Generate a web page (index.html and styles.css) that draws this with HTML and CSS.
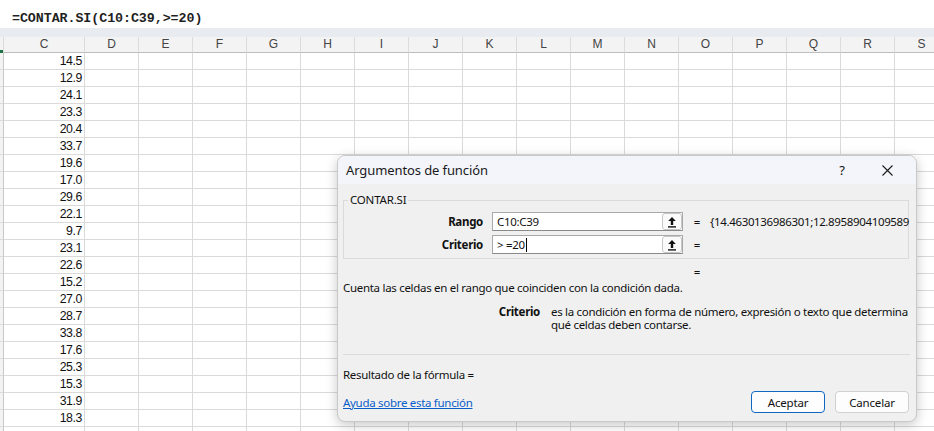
FILE: index.html
```html
<!DOCTYPE html>
<html lang="es">
<head>
<meta charset="utf-8">
<title>CONTAR.SI</title>
<link rel="stylesheet" href="styles.css">
</head>
<body>
<div class="app">
  <div class="formula-bar"><span class="formula">=CONTAR.SI(C10:C39,&gt;=20)</span></div>
  <div class="band"></div>
  <div class="sheet">
    <div class="row header-row">
      <div class="cell rh"><span class="sel-mark"></span></div>
      <div class="cell ch">C</div><div class="cell ch">D</div><div class="cell ch">E</div><div class="cell ch">F</div><div class="cell ch">G</div><div class="cell ch">H</div><div class="cell ch">I</div><div class="cell ch">J</div><div class="cell ch">K</div><div class="cell ch">L</div><div class="cell ch">M</div><div class="cell ch">N</div><div class="cell ch">O</div><div class="cell ch">P</div><div class="cell ch">Q</div><div class="cell ch">R</div><div class="cell ch">S</div>
    </div>
    <div id="rows"></div>
  </div>

  <div class="dialog">
    <div class="titlebar">
      <span class="title">Argumentos de función</span>
      <span class="help">?</span>
      <span class="close"><svg width="11" height="11" viewBox="0 0 11 11"><path d="M0.5 0.5 L10.5 10.5 M10.5 0.5 L0.5 10.5" stroke="#1a1a1a" stroke-width="1.1" fill="none"/></svg></span>
    </div>
    <div class="dbody">
      <fieldset class="group">
        <legend>CONTAR.SI</legend>
        <div class="args">
          <label class="arg-label">Rango</label>
          <div class="input"><span class="input-text">C10:C39</span><span class="ref-btn"><svg width="10" height="12" viewBox="0 0 10 12"><path d="M5 1 L1.2 5 H3.8 V9 H6.2 V5 H8.8 Z" fill="#111"/><rect x="1" y="10.2" width="8" height="1.4" fill="#111"/></svg></span></div>
          <span class="eq">=</span>
          <span class="val">{14.4630136986301;12.8958904109589</span>

          <label class="arg-label">Criterio</label>
          <div class="input"><span class="input-text">&gt; =20<span class="caret"></span></span><span class="ref-btn"><svg width="10" height="12" viewBox="0 0 10 12"><path d="M5 1 L1.2 5 H3.8 V9 H6.2 V5 H8.8 Z" fill="#111"/><rect x="1" y="10.2" width="8" height="1.4" fill="#111"/></svg></span></div>
          <span class="eq">=</span>
          <span class="val"></span>
        </div>
      </fieldset>
      <div class="result-eq"><span class="eq">=</span></div>
      <p class="desc">Cuenta las celdas en el rango que coinciden con la condición dada.</p>
      <div class="argdesc">
        <b class="argdesc-name">Criterio</b>
        <span class="argdesc-text">es la condición en forma de número, expresión o texto que determina<br>qué celdas deben contarse.</span>
      </div>
      <div class="sep"></div>
      <div class="result">Resultado de la fórmula =</div>
      <div class="footer">
        <a class="help-link" href="#">Ayuda sobre esta función</a>
        <div class="buttons">
          <button class="btn primary">Aceptar</button>
          <button class="btn">Cancelar</button>
        </div>
      </div>
    </div>
  </div>
</div>
<script src="script.js"></script>
</body>
</html>
```

FILE: script.js
```js
var vals = ["14.5","12.9","24.1","23.3","20.4","33.7","19.6","17.0","29.6","22.1","9.7","23.1","22.6","15.2","27.0","28.7","33.8","17.6","25.3","15.3","31.9","18.3",""];
var rows = document.getElementById("rows");
vals.forEach(function (v) {
  var r = document.createElement("div");
  r.className = "row";
  var html = '<div class="cell rh"></div><div class="cell num">' + v + '</div>';
  for (var i = 0; i < 16; i++) html += '<div class="cell"></div>';
  r.innerHTML = html;
  rows.appendChild(r);
});
```

FILE: styles.css
```css
* { box-sizing: border-box; }
html, body { margin: 0; padding: 0; }
body {
  width: 934px;
  height: 431px;
  overflow: hidden;
  background: #ffffff;
  font-family: "Liberation Sans", Arial, sans-serif;
}
.app { position: relative; width: 934px; height: 431px; overflow: hidden; }

.formula-bar {
  height: 28px;
  background: #ffffff;
  display: flex;
  align-items: center;
  padding-left: 12px;
  padding-top: 8px;
}
.formula {
  font-family: "Liberation Mono", "DejaVu Sans Mono", monospace;
  font-weight: bold;
  font-size: 13.3px;
  color: #1f1f1f;
  letter-spacing: -0.05px;
}
.band { height: 9px; background: #e8ebef; }

.sheet { width: 960px; }
.row {
  display: grid;
  grid-template-columns: 4px 81px repeat(16, 54px);
  height: 17px;
}
.cell {
  border-right: 1px solid #dadada;
  border-bottom: 1px solid #dadada;
  height: 17px;
  font-size: 12px;
  line-height: 16px;
  color: #111;
}
.header-row { height: 16px; }
.header-row .cell {
  height: 16px;
  background: #f3f3f3;
  border-bottom: 1px solid #bdbdbd;
  border-right: 1px solid #dcdcdc;
  line-height: 15px;
}
.rh { background: #f3f3f3; border-right: 1px solid #c8c8c8; position: relative; }
.sel-mark {
  position: absolute;
  left: 0; bottom: -1px;
  width: 3px; height: 3px;
  background: #1e7145;
}
.ch {
  text-align: center;
  color: #444;
  font-size: 12px;
}
.num {
  text-align: right;
  padding-right: 2px;
  letter-spacing: -0.4px;
  font-size: 12.3px;
}

/* dialog */
.dialog {
  position: absolute;
  left: 337px;
  top: 155px;
  width: 580px;
  height: 267px;
  background: #f0f0f0;
  border: 1px solid #c9c9c9;
  border-radius: 8px;
  box-shadow: 0 3px 12px rgba(0,0,0,0.22);
  overflow: hidden;
  font-family: "Noto Sans", "Open Sans", sans-serif;
  font-size: 11.5px;
  color: #111;
}
.titlebar {
  height: 28px;
  background: #f3f5fa;
  display: flex;
  align-items: center;
  padding-left: 8px;
}
.title { font-size: 13px; flex: 1; color: #1a1a1a; letter-spacing: -0.1px; }
.help {
  width: 20px;
  text-align: center;
  font-size: 13px;
  margin-right: 24px;
}
.close {
  width: 22px;
  display: flex;
  justify-content: center;
  margin-right: 18px;
}
.dbody { padding: 8px 7px 0 5px; }

.group {
  margin: 0;
  padding: 4px 0 4px 0;
  border: 1px solid #dadada;
  min-inline-size: 0;
}
.group legend {
  padding: 0 2px;
  margin-left: 4px;
  line-height: 16px;
  font-size: 11.5px;
  letter-spacing: -0.2px;
}
.args {
  display: grid;
  grid-template-columns: 139px 200px 21px 1fr;
  row-gap: 4px;
  align-items: center;
}
.arg-label {
  font-weight: bold;
  text-align: right;
  line-height: 19px;
  letter-spacing: -0.3px;
}
.input {
  margin-left: 9px;
  width: 191px;
  height: 19px;
  background: #fff;
  border: 1px solid #a9a9a9;
  border-bottom-color: #8a8a8a;
  display: flex;
  align-items: center;
  justify-content: space-between;
  padding-left: 4px;
}
.input-text { line-height: 17px; white-space: nowrap; letter-spacing: -0.3px; }
.caret {
  display: inline-block;
  width: 1px;
  height: 14px;
  background: #000;
  vertical-align: -3px;
  margin-left: 1px;
}
.ref-btn {
  width: 20px;
  height: 17px;
  border: 1px solid #c6c6c6;
  border-radius: 3px;
  background: #fbfbfb;
  display: flex;
  align-items: center;
  justify-content: center;
}
.eq { text-align: center; display: block; margin-left: 7px; width: 14px; }
.val { white-space: nowrap; margin-left: 6px; letter-spacing: -0.35px; }

.result-eq { height: 16px; margin-top: 5px; padding-left: 347px; line-height: 16px; }
.result-eq .eq { margin-left: 0; }
.desc { margin: 0; line-height: 16px; white-space: nowrap; letter-spacing: -0.3px; }
.argdesc {
  display: flex;
  margin-top: 9px;
  line-height: 13px;
}
.argdesc-name {
  width: 197px;
  text-align: right;
  flex: none;
  letter-spacing: -0.3px;
}
.argdesc-text { margin-left: 11px; white-space: nowrap; letter-spacing: -0.3px; }
.sep { height: 1px; background: #dcdcdc; margin-top: 23px; margin-right: -1px; }
.result { margin-top: 12px; line-height: 16px; letter-spacing: -0.3px; }
.footer {
  display: flex;
  align-items: center;
  justify-content: space-between;
  margin-top: 8px;
}
.help-link { color: #0a5ec8; text-decoration: underline; letter-spacing: -0.3px; }
.buttons { display: flex; gap: 10px; margin-right: 0; }
.btn {
  width: 74px;
  height: 22px;
  font-family: "Noto Sans", "Open Sans", sans-serif;
  font-size: 11.5px;
  color: #111;
  background: #fdfdfd;
  border: 1px solid #d0d0d0;
  border-radius: 4px;
  padding: 0;
  letter-spacing: -0.2px;
}
.btn.primary { border-color: #1067c2; }
```
